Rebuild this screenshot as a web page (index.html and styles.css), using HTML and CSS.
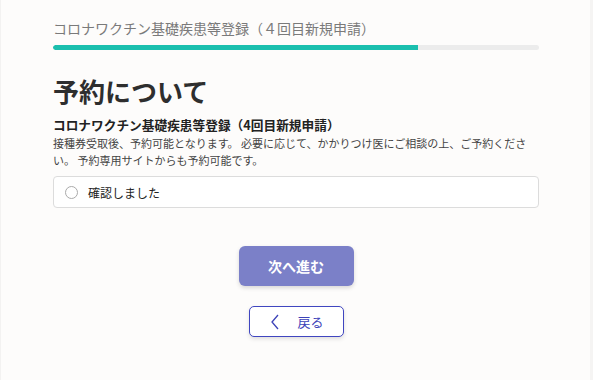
FILE: index.html
```html
<!DOCTYPE html>
<html lang="ja">
<head>
    <meta charset="UTF-8">
    <title>予約について</title>
    <link rel="stylesheet" href="styles.css">
</head>
<body>
    <div class="page">
        <div class="progress-title">コロナワクチン基礎疾患等登録（４回目新規申請）</div>
        <div class="progress"><div class="progress-fill" style="width: 75%"></div></div>

        <h1>予約について</h1>
        <h2>コロナワクチン基礎疾患等登録（4回目新規申請）</h2>
        <p class="desc">接種券受取後、予約可能となります。 必要に応じて、かかりつけ医にご相談の上、ご予約ください。 予約専用サイトからも予約可能です。</p>

        <label class="choice">
            <span class="radio"></span>
            <span>確認しました</span>
        </label>

        <div class="actions">
            <button type="button" class="btn-next">次へ進む</button>
            <button type="button" class="btn-back">
                <svg width="10" height="16" viewBox="0 0 10 16"><path d="M8 1 L2 8 L8 15" fill="none" stroke="#3c42b8" stroke-width="1.3"/></svg>
                <span>戻る</span>
            </button>
        </div>
    </div>
</body>
</html>
```

FILE: styles.css
```css
html, body {
    margin: 0;
    height: 100%;
}
body {
    font-family: "Noto Sans CJK JP", "Noto Sans", sans-serif;
    background: #fdfcfb;
    color: #333;
    border-left: 1px solid #f3f2f1;
    border-right: 3px solid #f5f4f3;
    box-sizing: border-box;
}
.page {
    padding: 18px 51px 0 52px;
}
.progress-title {
    font-size: 14px;
    color: #7a7a7a;
    line-height: 20px;
}
.progress {
    margin-top: 7px;
    height: 5px;
    border-radius: 3px;
    background: #ececec;
    overflow: hidden;
}
.progress-fill {
    height: 100%;
    background: #1bbfae;
    border-radius: 3px 0 0 3px;
}
h1 {
    margin: 23px 0 0;
    font-size: 26px;
    line-height: 36px;
    font-weight: bold;
    color: #2e2e2e;
}
h2 {
    margin: 6px 0 0;
    font-size: 12.7px;
    line-height: 19px;
    font-weight: bold;
    color: #222;
}
.desc {
    margin: 1px 0 0;
    font-size: 11px;
    line-height: 17px;
    color: #444;
    padding-right: 12px;
}
.choice {
    margin-top: 7px;
    display: flex;
    align-items: center;
    gap: 10px;
    height: 30px;
    padding: 0 11px;
    border: 1px solid #dcdcdc;
    border-radius: 4px;
    background: #fff;
    font-size: 12px;
    color: #222;
}
.radio {
    width: 11px;
    height: 11px;
    border: 1px solid #aaa;
    border-radius: 50%;
}
.actions {
    display: flex;
    flex-direction: column;
    align-items: center;
    gap: 20px;
    margin-top: 38px;
}
button {
    font-family: inherit;
    cursor: pointer;
}
.btn-next {
    width: 115px;
    height: 40px;
    border: none;
    border-radius: 6px;
    background: #7b80c8;
    color: #fff;
    font-size: 14px;
    font-weight: bold;
    box-shadow: 0 2px 4px rgba(0, 0, 0, 0.15);
}
.btn-back {
    width: 95px;
    height: 31px;
    border: 1px solid #4046c0;
    border-radius: 5px;
    background: #fff;
    color: #3c42b8;
    font-size: 13px;
    display: flex;
    align-items: center;
    justify-content: center;
    gap: 17px;
    padding: 0 0 0 2px;
    box-shadow: 0 2px 4px rgba(0, 0, 0, 0.12);
}
```
